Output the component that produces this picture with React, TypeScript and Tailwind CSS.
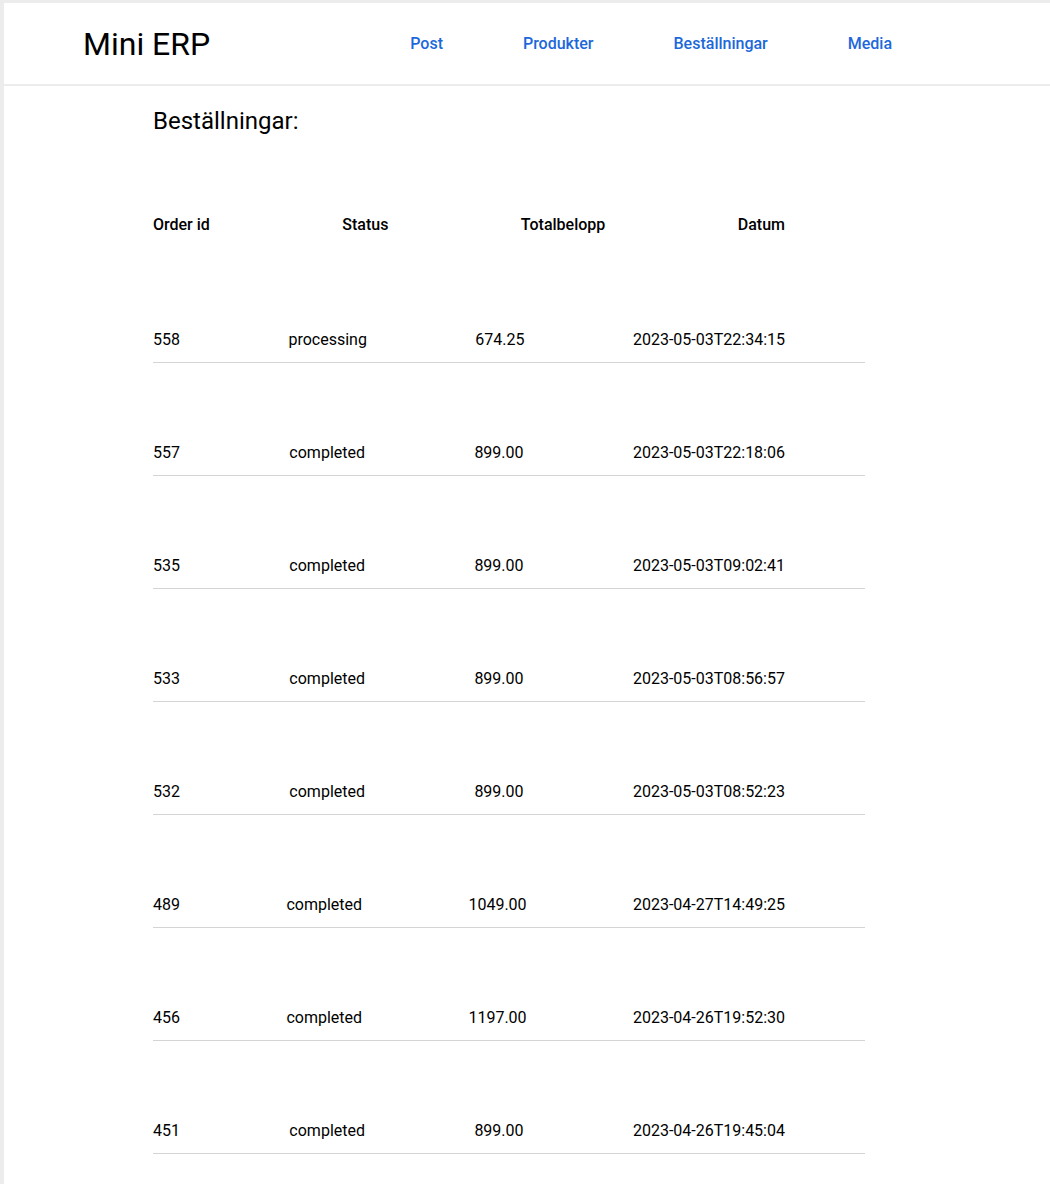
import React from 'react';

interface Order {
  id: number;
  status: string;
  total: string;
  date: string;
}

const orders: Order[] = [
  { id: 558, status: 'processing', total: '674.25', date: '2023-05-03T22:34:15' },
  { id: 557, status: 'completed', total: '899.00', date: '2023-05-03T22:18:06' },
  { id: 535, status: 'completed', total: '899.00', date: '2023-05-03T09:02:41' },
  { id: 533, status: 'completed', total: '899.00', date: '2023-05-03T08:56:57' },
  { id: 532, status: 'completed', total: '899.00', date: '2023-05-03T08:52:23' },
  { id: 489, status: 'completed', total: '1049.00', date: '2023-04-27T14:49:25' },
  { id: 456, status: 'completed', total: '1197.00', date: '2023-04-26T19:52:30' },
  { id: 451, status: 'completed', total: '899.00', date: '2023-04-26T19:45:04' },
];

const links = ['Post', 'Produkter', 'Beställningar', 'Media'];

const Header: React.FC = () => {
  return (
    <header className="h-[83px] bg-white border-b-2 border-[#ececec] flex items-center pl-[79px]">
      <h1 className="text-[32px] leading-none text-black">Mini ERP</h1>
      <nav className="ml-[200px] flex items-center gap-[80px]">
        {links.map((l) => (
          <a key={l} href="#" className="text-base font-medium text-[#1c68da]">
            {l}
          </a>
        ))}
      </nav>
    </header>
  );
};

export default function App() {
  return (
    <div
      className="min-h-screen bg-white border-l-4 border-t-[3px] border-[#ececec] text-black"
      style={{ fontFamily: 'Roboto, "Noto Sans", sans-serif' }}
    >
      <Header />
      <main className="pl-[149px]">
        <h2 className="mt-[19px] text-2xl leading-8">Beställningar:</h2>
        <div className="w-[712px] mt-[76px]">
          <div className="w-[632px] flex justify-between text-base leading-6 font-medium mb-[13px]">
            <span>Order id</span>
            <span>Status</span>
            <span>Totalbelopp</span>
            <span>Datum</span>
          </div>
          {orders.map((o) => (
            <div key={o.id} className="pt-[78px] pb-[10px] border-b border-[#d4d4d4]">
              <div className="w-[632px] flex justify-between text-base leading-6">
                <span>{o.id}</span>
                <span>{o.status}</span>
                <span>{o.total}</span>
                <span>{o.date}</span>
              </div>
            </div>
          ))}
        </div>
      </main>
    </div>
  );
}
